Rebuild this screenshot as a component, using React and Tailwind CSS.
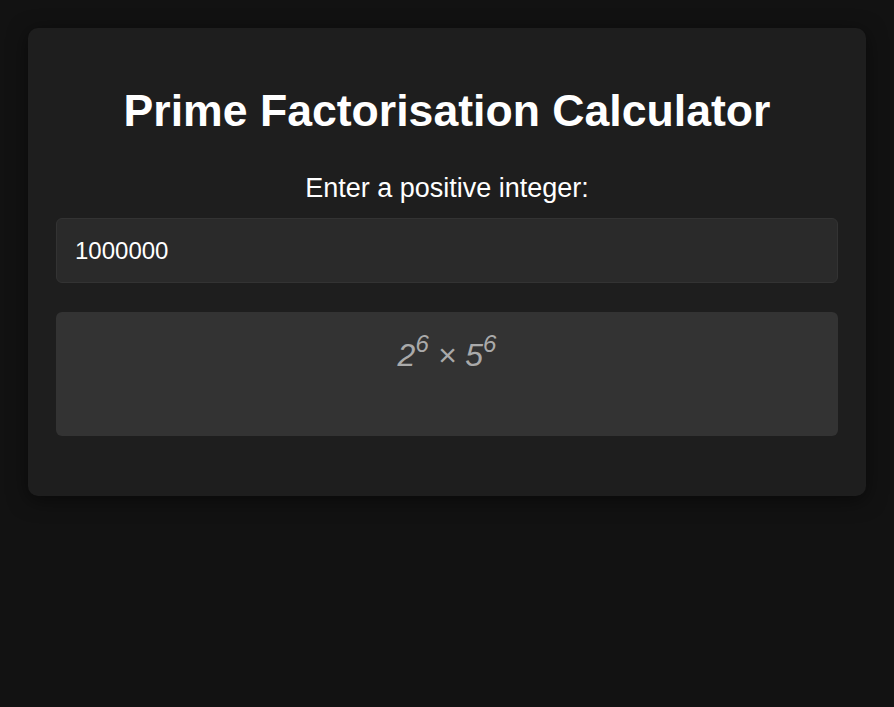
export default function App() {
  return (
    <div className="min-h-[707px] bg-[#121212] pt-[28px] px-[28px] font-['Liberation_Sans',Arial,sans-serif]">
      <div className="rounded-[10px] bg-[#1e1e1e] px-[28px] pt-[28px] pb-[60px] shadow-[0_4px_20px_rgba(0,0,0,0.5)]">
        <h1 className="mt-[29px] text-center text-[44.6px] font-bold leading-[52px] text-white">
          Prime Factorisation Calculator
        </h1>
        <label className="mt-[35px] block text-center text-[27px] leading-[32px] text-white">
          Enter a positive integer:
        </label>
        <div className="mt-[14px] flex h-[65px] items-center rounded-[6px] border border-[#333] bg-[#2a2a2a] px-[18px] text-[24px] text-white">
          1000000
        </div>
        <div className="mt-[29px] h-[124px] rounded-[6px] bg-[#333] pt-[25px] text-center text-[32px] italic leading-[36px] text-[#aaa]">
          2<sup className="-top-[14px] text-[24px]">6</sup> × 5<sup className="-top-[14px] text-[24px]">6</sup>
        </div>
      </div>
    </div>
  );
}
